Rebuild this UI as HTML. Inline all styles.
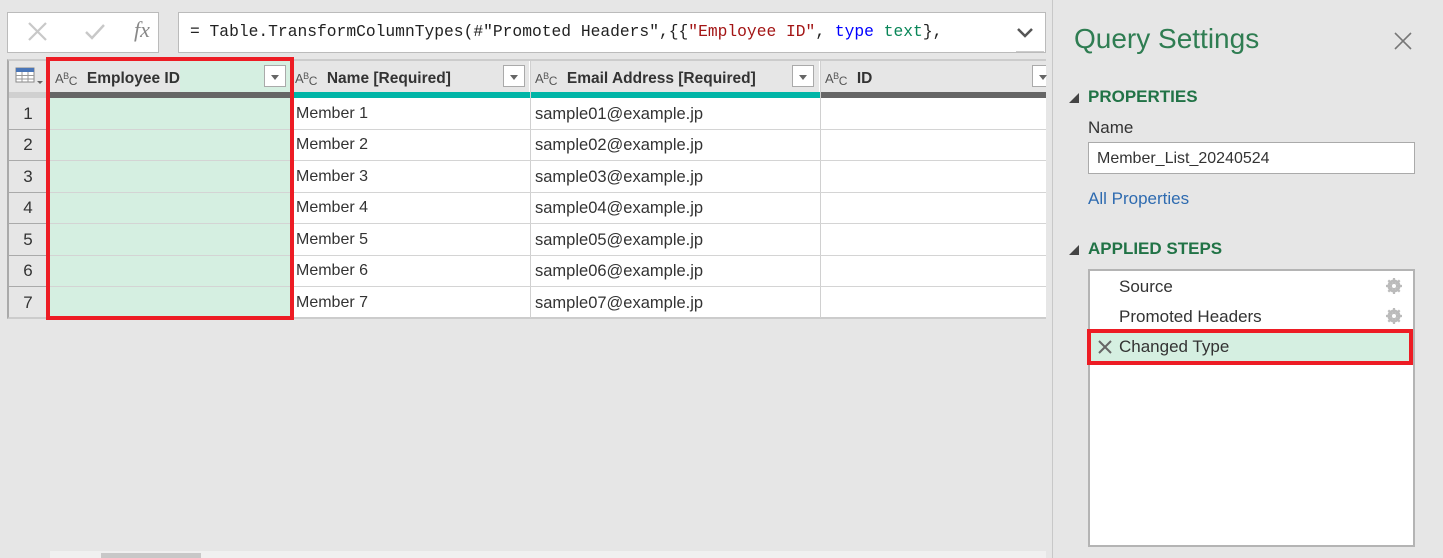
<!DOCTYPE html>
<html><head><meta charset="utf-8"><style>
*{margin:0;padding:0;box-sizing:border-box}
body{width:1443px;height:558px;background:#e6e6e6;position:relative;overflow:hidden;font-family:"Segoe UI","Liberation Sans","DejaVu Sans",sans-serif;color:#333}
.a{position:absolute}
.cell{position:absolute;font-size:16px;color:#333;line-height:32px;padding-left:5px;white-space:nowrap}
.hd{position:absolute;top:61px;height:31px;background:#e6e6e6;font-weight:bold;font-size:15.5px;line-height:31px;color:#333;white-space:nowrap}
.abc{font-size:13px;font-weight:normal;color:#555;margin:0 10px 0 6px;letter-spacing:-0.5px}
.abc sup{font-size:9px;vertical-align:4px}
.abc sub{font-size:12px;vertical-align:-2px}
.dd{position:absolute;top:4px;width:22px;height:22px;background:#fff;border:1px solid #aaa}
.dd:after{content:"";position:absolute;left:6px;top:9px;border-left:4px solid transparent;border-right:4px solid transparent;border-top:5px solid #666}
.rn{position:absolute;left:9px;width:38px;text-align:center;font-size:17px;line-height:32px;color:#333}
</style></head><body>
<div class="a" style="left:7px;top:12px;width:152px;height:41px;background:#fff;border:1px solid #bbb"></div>
<svg class="a" style="left:26px;top:22px" width="24" height="20"><path d="M3 1L20 18M20 1L3 18" stroke="#c8c8c8" stroke-width="2.2"/></svg>
<svg class="a" style="left:84px;top:22px" width="24" height="20"><path d="M2 10L8 16L20 3" stroke="#c8c8c8" stroke-width="2.4" fill="none"/></svg>
<div class="a" style="left:134px;top:17px;font-family:'Liberation Serif',serif;font-style:italic;font-size:22px;color:#888">fx</div>
<div class="a" style="left:178px;top:12px;width:868px;height:41px;background:#fff;border:1px solid #bbb"></div>
<div class="a" style="left:190px;top:22px;font-family:'Liberation Mono',monospace;font-size:16.3px;color:#222;white-space:pre">= Table.TransformColumnTypes(#"Promoted Headers",{{<span style="color:#a31515">"Employee ID"</span>, <span style="color:#0000ff">type</span> <span style="color:#098658">text</span>},</div>
<svg class="a" style="left:1015px;top:26px" width="20" height="14"><path d="M3 3L10 10L17 3" stroke="#555" stroke-width="2.5" fill="none"/></svg>
<div class="a" style="left:1016px;top:51px;width:28px;height:1px;background:#ccc"></div>

<div class="a" style="left:7px;top:59px;width:1039px;height:260px;background:#fff;border-left:2px solid #aaa;border-top:2px solid #ccc;border-bottom:2px solid #ccc"></div>
<div class="a" style="left:9px;top:61px;width:38px;height:256px;background:#e6e6e6"></div>
<div class="hd" style="left:47px;width:245px;background:#d5efe1"></div>
<div class="hd" style="left:293px;width:236px"></div>
<div class="hd" style="left:531px;width:288px"></div>
<div class="hd" style="left:821px;width:225px"></div>
<svg class="a" style="left:15px;top:67px" width="30" height="20"><rect x="1" y="1" width="18" height="14" fill="#fff" stroke="#888"/><rect x="1" y="1" width="18" height="4" fill="#4a76b8"/><path d="M1 8.5H19M1 12H19M7 5V15M13 5V15" stroke="#999"/><path d="M22 14L28 14L25 17Z" fill="#666"/></svg>
<div class="hd" style="left:49px"><span class="abc">A<sup>B</sup><sub>C</sub></span>Employee ID</div>
<div class="dd" style="left:264px;top:65px"></div>
<div class="hd" style="left:293px"><span class="abc" style="margin-left:2px">A<sup>B</sup><sub>C</sub></span>Name [Required]</div>
<div class="dd" style="left:503px;top:65px"></div>
<div class="hd" style="left:532px"><span class="abc" style="margin-left:3px">A<sup>B</sup><sub>C</sub></span>Email Address [Required]</div>
<div class="dd" style="left:792px;top:65px"></div>
<div class="hd" style="left:822px"><span class="abc" style="margin-left:3px">A<sup>B</sup><sub>C</sub></span>ID</div>
<div class="dd" style="left:1032px;top:65px;width:14px;border-right:none"></div>
<div class="a" style="left:292px;top:61px;width:1px;height:257px;background:#d0d0d0"></div>
<div class="a" style="left:530px;top:61px;width:1px;height:257px;background:#d0d0d0"></div>
<div class="a" style="left:820px;top:61px;width:1px;height:257px;background:#d0d0d0"></div>
<div class="a" style="left:47px;top:59px;width:1px;height:259px;background:#aaa"></div>
<div class="a" style="left:9px;top:92px;width:1037px;height:6px;background:#d0d0d0"></div>
<div class="a" style="left:47px;top:92px;width:245px;height:6px;background:#666"></div>
<div class="a" style="left:293px;top:92px;width:237px;height:6px;background:#00b5a7"></div>
<div class="a" style="left:531px;top:92px;width:289px;height:6px;background:#00b5a7"></div>
<div class="a" style="left:821px;top:92px;width:225px;height:6px;background:#666"></div>
<div class="a" style="left:47px;top:98px;width:245px;height:220px;background:#d5efe1"></div>
<div class="a" style="left:9px;top:129px;width:1037px;height:1px;background:#d4d4d4"></div>
<div class="a" style="left:9px;top:160px;width:1037px;height:1px;background:#d4d4d4"></div>
<div class="a" style="left:9px;top:192px;width:1037px;height:1px;background:#d4d4d4"></div>
<div class="a" style="left:9px;top:223px;width:1037px;height:1px;background:#d4d4d4"></div>
<div class="a" style="left:9px;top:255px;width:1037px;height:1px;background:#d4d4d4"></div>
<div class="a" style="left:9px;top:286px;width:1037px;height:1px;background:#d4d4d4"></div>
<div class="a" style="left:9px;top:129px;width:38px;height:1px;background:#aaa"></div>
<div class="a" style="left:9px;top:160px;width:38px;height:1px;background:#aaa"></div>
<div class="a" style="left:9px;top:192px;width:38px;height:1px;background:#aaa"></div>
<div class="a" style="left:9px;top:223px;width:38px;height:1px;background:#aaa"></div>
<div class="a" style="left:9px;top:255px;width:38px;height:1px;background:#aaa"></div>
<div class="a" style="left:9px;top:286px;width:38px;height:1px;background:#aaa"></div>

<div class="rn" style="top:98px">1</div>
<div class="rn" style="top:129px">2</div>
<div class="rn" style="top:161px">3</div>
<div class="rn" style="top:192px">4</div>
<div class="rn" style="top:224px">5</div>
<div class="rn" style="top:255px">6</div>
<div class="rn" style="top:287px">7</div>

<div class="cell" style="left:291px;top:98px">Member 1</div>
<div class="cell" style="left:291px;top:129px">Member 2</div>
<div class="cell" style="left:291px;top:161px">Member 3</div>
<div class="cell" style="left:291px;top:192px">Member 4</div>
<div class="cell" style="left:291px;top:224px">Member 5</div>
<div class="cell" style="left:291px;top:255px">Member 6</div>
<div class="cell" style="left:291px;top:287px">Member 7</div>
<div class="cell" style="left:530px;top:98px;font-size:16.5px">sample01@example.jp</div>
<div class="cell" style="left:530px;top:129px;font-size:16.5px">sample02@example.jp</div>
<div class="cell" style="left:530px;top:161px;font-size:16.5px">sample03@example.jp</div>
<div class="cell" style="left:530px;top:192px;font-size:16.5px">sample04@example.jp</div>
<div class="cell" style="left:530px;top:224px;font-size:16.5px">sample05@example.jp</div>
<div class="cell" style="left:530px;top:255px;font-size:16.5px">sample06@example.jp</div>
<div class="cell" style="left:530px;top:287px;font-size:16.5px">sample07@example.jp</div>

<div class="a" style="left:46px;top:57px;width:248px;height:263px;border:4px solid #ed1c24"></div>

<div class="a" style="left:50px;top:551px;width:996px;height:7px;background:#f0f0f0"></div>
<div class="a" style="left:101px;top:553px;width:100px;height:5px;background:#c8c8c8"></div>

<div class="a" style="left:1052px;top:0;width:1px;height:558px;background:#c8c8c8"></div>
<div class="a" style="left:1074px;top:23px;font-size:28px;color:#2f7d52">Query Settings</div>
<svg class="a" style="left:1393px;top:31px" width="20" height="20"><path d="M2 2L18 18M18 2L2 18" stroke="#777" stroke-width="1.6"/></svg>
<svg class="a" style="left:1068px;top:92px" width="12" height="12"><path d="M1 11L11 11L11 1Z" fill="#444"/></svg>
<div class="a" style="left:1088px;top:87px;font-size:17px;font-weight:bold;color:#217346">PROPERTIES</div>
<div class="a" style="left:1088px;top:118px;font-size:17px;color:#333">Name</div>
<div class="a" style="left:1088px;top:142px;width:327px;height:32px;background:#fff;border:1px solid #aaa;font-size:16px;line-height:32px;padding-left:8px;color:#333">Member_List_20240524</div>
<div class="a" style="left:1088px;top:189px;font-size:17px;color:#2e6bb0">All Properties</div>
<svg class="a" style="left:1068px;top:244px" width="12" height="12"><path d="M1 11L11 11L11 1Z" fill="#444"/></svg>
<div class="a" style="left:1088px;top:239px;font-size:17px;font-weight:bold;color:#217346">APPLIED STEPS</div>
<div class="a" style="left:1088px;top:269px;width:327px;height:278px;background:#fff;border:2px solid #b4b4b4"></div>
<div class="a" style="left:1119px;top:277px;font-size:17px;color:#333">Source</div>
<div class="a" style="left:1119px;top:307px;font-size:17px;color:#333">Promoted Headers</div>
<svg class="a" style="left:1385px;top:277px" width="18" height="18"><circle cx="9" cy="9" r="5" fill="none" stroke="#bbb" stroke-width="3"/><path d="M9 1V17M1 9H17M3.3 3.3L14.7 14.7M14.7 3.3L3.3 14.7" stroke="#bbb" stroke-width="2.2"/><circle cx="9" cy="9" r="2" fill="#fff"/></svg>
<svg class="a" style="left:1385px;top:307px" width="18" height="18"><circle cx="9" cy="9" r="5" fill="none" stroke="#bbb" stroke-width="3"/><path d="M9 1V17M1 9H17M3.3 3.3L14.7 14.7M14.7 3.3L3.3 14.7" stroke="#bbb" stroke-width="2.2"/><circle cx="9" cy="9" r="2" fill="#fff"/></svg>
<div class="a" style="left:1087px;top:329px;width:326px;height:36px;background:#d5efe1;border:4px solid #ed1c24"></div>
<svg class="a" style="left:1097px;top:339px" width="16" height="16"><path d="M2 2L14 14M14 2L2 14" stroke="#666" stroke-width="2"/></svg>
<div class="a" style="left:1119px;top:337px;font-size:17px;color:#333">Changed Type</div>
</body></html>
